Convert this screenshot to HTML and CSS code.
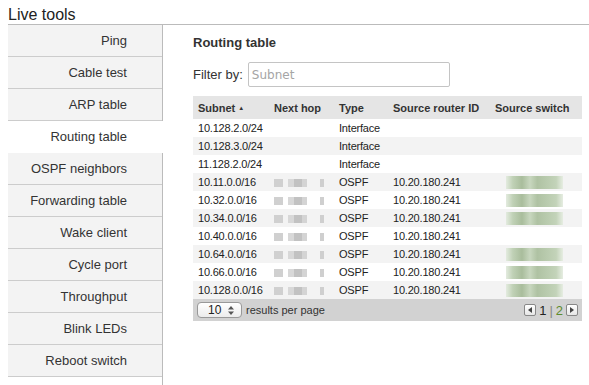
FILE: index.html
```html
<!DOCTYPE html>
<html lang="en">
<head>
  <meta charset="UTF-8" />
  <meta name="viewport" content="width=device-width, initial-scale=1.0" />
  <title>Live tools - Routing table</title>
  <link rel="stylesheet" href="styles.css">
</head>
<body>
  <h1 class="page-title">Live tools</h1>

  <div class="main">
    <ul class="tool-nav">
      <li>Ping</li>
      <li>Cable test</li>
      <li>ARP table</li>
      <li class="active">Routing table</li>
      <li>OSPF neighbors</li>
      <li>Forwarding table</li>
      <li>Wake client</li>
      <li>Cycle port</li>
      <li>Throughput</li>
      <li>Blink LEDs</li>
      <li>Reboot switch</li>
    </ul>

    <div class="content">
      <h2>Routing table</h2>
      <div class="filter">
        <label for="filterInput">Filter by:</label>
        <input type="text" id="filterInput" placeholder="Subnet">
      </div>

      <table class="routes">
        <thead>
          <tr>
            <th class="c-subnet">Subnet <span class="sort">&#9650;</span></th>
            <th class="c-hop">Next hop</th>
            <th class="c-type">Type</th>
            <th class="c-router">Source router ID</th>
            <th class="c-switch">Source switch</th>
          </tr>
        </thead>
        <tbody>
          <tr><td>10.128.2.0/24</td><td></td><td>Interface</td><td></td><td></td></tr>
          <tr><td>10.128.3.0/24</td><td></td><td>Interface</td><td></td><td></td></tr>
          <tr><td>11.128.2.0/24</td><td></td><td>Interface</td><td></td><td></td></tr>
          <tr><td>10.11.0.0/16</td><td><span class="blur-hop"></span></td><td>OSPF</td><td>10.20.180.241</td><td><span class="blur-switch"></span></td></tr>
          <tr><td>10.32.0.0/16</td><td><span class="blur-hop"></span></td><td>OSPF</td><td>10.20.180.241</td><td><span class="blur-switch"></span></td></tr>
          <tr><td>10.34.0.0/16</td><td><span class="blur-hop"></span></td><td>OSPF</td><td>10.20.180.241</td><td><span class="blur-switch"></span></td></tr>
          <tr><td>10.40.0.0/16</td><td><span class="blur-hop"></span></td><td>OSPF</td><td>10.20.180.241</td><td></td></tr>
          <tr><td>10.64.0.0/16</td><td><span class="blur-hop"></span></td><td>OSPF</td><td>10.20.180.241</td><td><span class="blur-switch"></span></td></tr>
          <tr><td>10.66.0.0/16</td><td><span class="blur-hop"></span></td><td>OSPF</td><td>10.20.180.241</td><td><span class="blur-switch"></span></td></tr>
          <tr><td>10.128.0.0/16</td><td><span class="blur-hop"></span></td><td>OSPF</td><td>10.20.180.241</td><td><span class="blur-switch"></span></td></tr>
        </tbody>
      </table>

      <div class="table-footer">
        <div class="per-page">
          <span class="select">10
            <svg width="6" height="9" viewBox="0 0 6 9"><path d="M3 0 L6 3.5 H0 Z M3 9 L0 5.5 H6 Z" fill="#555"/></svg>
          </span>
          <span>results per page</span>
        </div>
        <div class="pager">
          <span class="page-btn"><svg width="4" height="6" viewBox="0 0 4 6"><path d="M4 0 V6 L0 3 Z" fill="#444"/></svg></span>
          <span class="page-cur">1</span>
          <span class="page-sep">|</span>
          <span class="page-link">2</span>
          <span class="page-btn"><svg width="4" height="6" viewBox="0 0 4 6"><path d="M0 0 V6 L4 3 Z" fill="#444"/></svg></span>
        </div>
      </div>
    </div>
  </div>
</body>
</html>
```

FILE: styles.css
```css
body {
  font-family: "Liberation Sans", Arial, sans-serif;
  margin: 6px 0 0 8px;
  color: #333;
  background: #fff;
}
.page-title {
  margin: 0;
  font-size: 16px;
  font-weight: normal;
  line-height: 18px;
  color: #222;
  border-bottom: 1px solid #bbb;
}
.main {
  display: flex;
  min-height: calc(100vh - 25px);
}
.tool-nav {
  list-style: none;
  margin: 0;
  padding: 0;
  width: 154px;
  border-right: 1px solid #bbb;
  flex-shrink: 0;
}
.tool-nav li {
  height: 31px;
  line-height: 31px;
  font-size: 13px;
  text-align: right;
  padding-right: 35px;
  background: #f3f3f3;
  border-bottom: 1px solid #ccc;
}
.tool-nav li.active {
  background: #fff;
  margin-right: -1px;
  padding-right: 36px;
  border-bottom-color: #fff;
}
.content {
  padding: 10px 0 0 30px;
  flex: 1;
}
.content h2 {
  margin: 0;
  font-size: 13px;
  line-height: 16px;
}
.filter {
  display: flex;
  align-items: center;
  gap: 5px;
  margin-top: 11px;
  font-size: 13px;
}
.filter input {
  width: 202px;
  height: 25px;
  box-sizing: border-box;
  margin: 0;
  padding: 0 3px;
  border: 1px solid #c4c4c4;
  border-radius: 2px;
  font-family: "DejaVu Sans", sans-serif;
  font-size: 12px;
}
.filter input::placeholder {
  color: #a5a5a5;
}
.routes {
  margin-top: 9px;
  width: 389px;
  border-collapse: collapse;
  font-size: 11px;
}
.routes th {
  height: 23px;
  padding: 0 5px;
  text-align: left;
  background: #e5e5e5;
  color: #333;
}
.routes th .sort {
  font-size: 6px;
  vertical-align: 2px;
}
.c-subnet { width: 66px; }
.c-hop { width: 55px; }
.c-type { width: 44px; }
.c-router { width: 92px; }
.routes td {
  height: 18px;
  padding: 0 5px;
  line-height: 14px;
  letter-spacing: -0.2px;
  color: #222;
  white-space: nowrap;
}
.routes tbody tr:nth-child(even) {
  background: #f3f3f3;
}
.blur-hop {
  display: inline-block;
  vertical-align: middle;
  width: 53px;
  height: 8px;
  background: linear-gradient(90deg, #d0d0d0 0 9px, transparent 9px 14px, #d8d8d8 14px 20px, #c2c2c2 20px 28px, #d4d4d4 28px 33px, transparent 33px 46px, #cfcfcf 46px 50px, transparent 50px);
}
.blur-switch {
  display: inline-block;
  vertical-align: middle;
  margin-left: 11px;
  width: 57px;
  height: 13px;
  background: linear-gradient(90deg, #e3ebdf, #c0d1b6 12%, #a9bd9c 28%, #c8d7bf 42%, #afc2a3 55%, #b9cbae 72%, #c3d3b9 88%, #e6ede2);
}
.table-footer {
  width: 389px;
  height: 22px;
  box-sizing: border-box;
  padding: 0 4px;
  display: flex;
  align-items: center;
  justify-content: space-between;
  background: #d2d2d2;
  font-size: 11px;
}
.per-page {
  display: flex;
  align-items: center;
  gap: 4px;
}
.select {
  display: inline-flex;
  align-items: center;
  justify-content: space-between;
  width: 45px;
  height: 16px;
  box-sizing: border-box;
  padding: 0 7px 0 10px;
  background: linear-gradient(#fff, #ececec);
  border: 1px solid #999;
  border-radius: 4px;
  font-size: 12px;
  color: #222;
}
.pager {
  display: flex;
  align-items: center;
  gap: 3px;
  font-size: 13px;
}
.page-btn {
  display: inline-flex;
  align-items: center;
  justify-content: center;
  width: 12px;
  height: 12px;
  box-sizing: border-box;
  background: linear-gradient(#fff, #e6e6e6);
  border: 1px solid #888;
  border-radius: 2px;
}
.page-cur { color: #222; }
.page-sep { color: #888; }
.page-link { color: #5d8b2f; }
```
